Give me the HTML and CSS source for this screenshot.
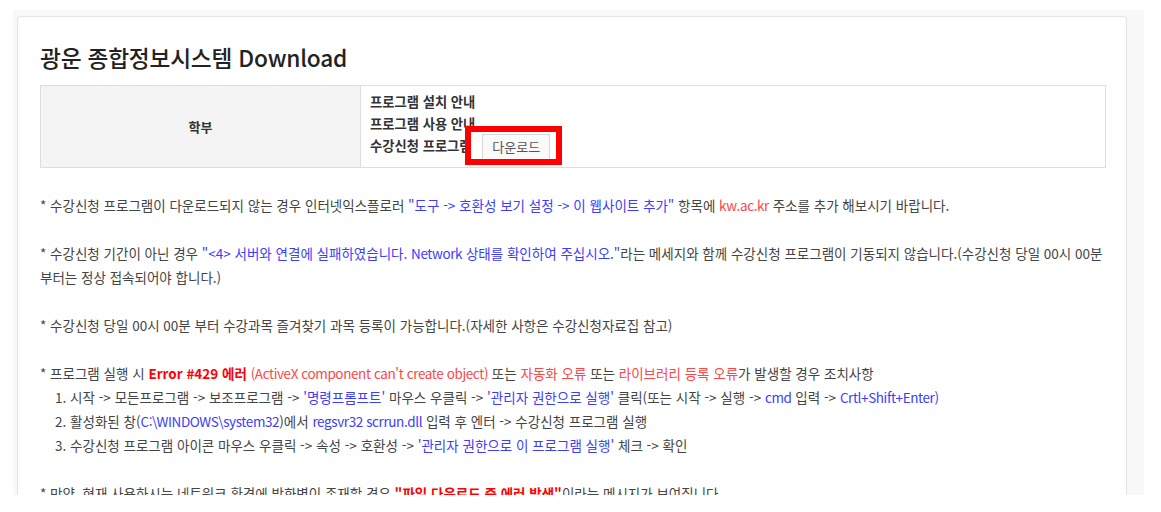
FILE: index.html
```html
<!DOCTYPE html>
<html lang="ko">
<head>
<meta charset="utf-8">
<title>광운 종합정보시스템 Download</title>
<link rel="stylesheet" href="styles.css">
</head>
<body>
<div class="page">
  <div class="card">
    <h2 class="title">광운 종합정보시스템 Download</h2>
    <table class="dl-table">
      <tr>
        <th class="dl-head">학부</th>
        <td class="dl-cell">
          <div class="dl-inner">
            <div class="dl-line">프로그램 설치 안내</div>
            <div class="dl-line">프로그램 사용 안내</div>
            <div class="dl-line">수강신청 프로그램 <button class="dl-btn">다운로드</button></div>
            <div class="highlight"></div>
          </div>
        </td>
      </tr>
    </table>
    <div class="notes">
      <p>* 수강신청 프로그램이 다운로드되지 않는 경우 인터넷익스플로러 <span class="blue">"도구 -&gt; 호환성 보기 설정 -&gt; 이 웹사이트 추가"</span> 항목에 <span class="red lat">kw.ac.kr</span> 주소를 추가 해보시기 바랍니다.</p>
      <p>* 수강신청 기간이 아닌 경우 <span class="blue">"&lt;4&gt; 서버와 연결에 실패하였습니다. <span class="lat">Network</span> 상태를 확인하여 주십시오."</span>라는 메세지와 함께 수강신청 프로그램이 기동되지 않습니다.(수강신청 당일 00시 00분 부터는 정상 접속되어야 합니다.)</p>
      <p>* 수강신청 당일 00시 00분 부터 수강과목 즐겨찾기 과목 등록이 가능합니다.(자세한 사항은 수강신청자료집 참고)</p>
      <p>* 프로그램 실행 시 <b class="err">Error #429 에러</b> <span class="red lat">(ActiveX component can't create object)</span> 또는 <span class="red">자동화 오류</span> 또는 <span class="red">라이브러리 등록 오류</span>가 발생할 경우 조치사항<br>
        <span class="step">1. 시작 -&gt; 모든프로그램 -&gt; 보조프로그램 -&gt; <span class="blue">'명령프롬프트'</span> 마우스 우클릭 -&gt; <span class="blue">'관리자 권한으로 실행'</span> 클릭(또는 시작 -&gt; 실행 -&gt; <span class="blue lat">cmd</span> 입력 -&gt; <span class="blue lat">Crtl+Shift+Enter)</span></span><br>
        <span class="step">2. 활성화된 창(<span class="blue lat">C:\WINDOWS\system32</span>)에서 <span class="blue lat">regsvr32 scrrun.dll</span> 입력 후 엔터 -&gt; 수강신청 프로그램 실행</span><br>
        <span class="step">3. 수강신청 프로그램 아이콘 마우스 우클릭 -&gt; 속성 -&gt; 호환성 -&gt; <span class="blue">'관리자 권한으로 이 프로그램 실행'</span> 체크 -&gt; 확인</span></p>
      <p>* 만약, 현재 사용하시는 네트워크 환경에 방화벽이 존재할 경우 <b class="err">"파일 다운로드 중 에러 발생"</b>이라는 메시지가 보여집니다</p>
    </div>
  </div>
</div>
</body>
</html>
```

FILE: styles.css
```css
html, body {
  margin: 0;
  padding: 0;
  background: #ffffff;
}
body {
  font-family: "Noto Sans CJK KR", "Noto Sans", sans-serif;
  color: #444;
}
.page {
  margin: 10px 0 0 13px;
  width: 1131px;
  height: 485px;
  box-sizing: border-box;
  padding: 6px 17px 0 4px;
  background: #f7f8fa;
  overflow: hidden;
}
.card {
  background: #fff;
  border: 1px solid #e3e4e6;
  border-radius: 4px;
  padding: 0 20px 40px 22px;
  min-height: 600px;
}
.title {
  margin: 25px 0 11px;
  font-size: 22.7px;
  line-height: 32px;
  font-weight: 500;
  color: #222;
  letter-spacing: -0.2px;
}
.dl-table {
  width: 100%;
  border-collapse: collapse;
  border: 1px solid #dedede;
}
.dl-head {
  width: 319px;
  background: #f4f4f4;
  border-right: 1px solid #dedede;
  font-size: 13px;
  font-weight: 700;
  color: #333;
  text-align: center;
  padding: 0;
}
.dl-cell {
  padding: 5px 10px 10px 9px;
  background: #fff;
}
.dl-inner {
  position: relative;
}
.dl-line {
  font-size: 13.3px;
  line-height: 22px;
  font-weight: 700;
  color: #333;
  white-space: nowrap;
}
.dl-btn {
  display: inline-block;
  vertical-align: middle;
  margin: -5px 0 -4px 7px;
  height: 26px;
  padding: 0 9px;
  border: 1px solid #d6d6d6;
  background: #fafafa;
  font-family: "Noto Sans CJK KR", "Noto Sans", sans-serif;
  font-size: 13px;
  font-weight: 400;
  color: #555;
}
.highlight {
  position: absolute;
  left: 95px;
  top: 35px;
  width: 97px;
  height: 39px;
  box-sizing: border-box;
  border: 6px solid #ff0000;
}
.notes {
  margin-top: 25px;
  font-size: 13.5px;
  line-height: 24px;
  color: #444;
  word-break: keep-all;
}
.notes p {
  margin: 0 0 24px;
}
.lat {
  letter-spacing: -0.4px;
}
.step {
  padding-left: 15px;
}
.blue {
  color: #3c3cff;
}
.red {
  color: #ff4646;
}
.err {
  color: #ff0000;
  font-weight: 700;
}
```
